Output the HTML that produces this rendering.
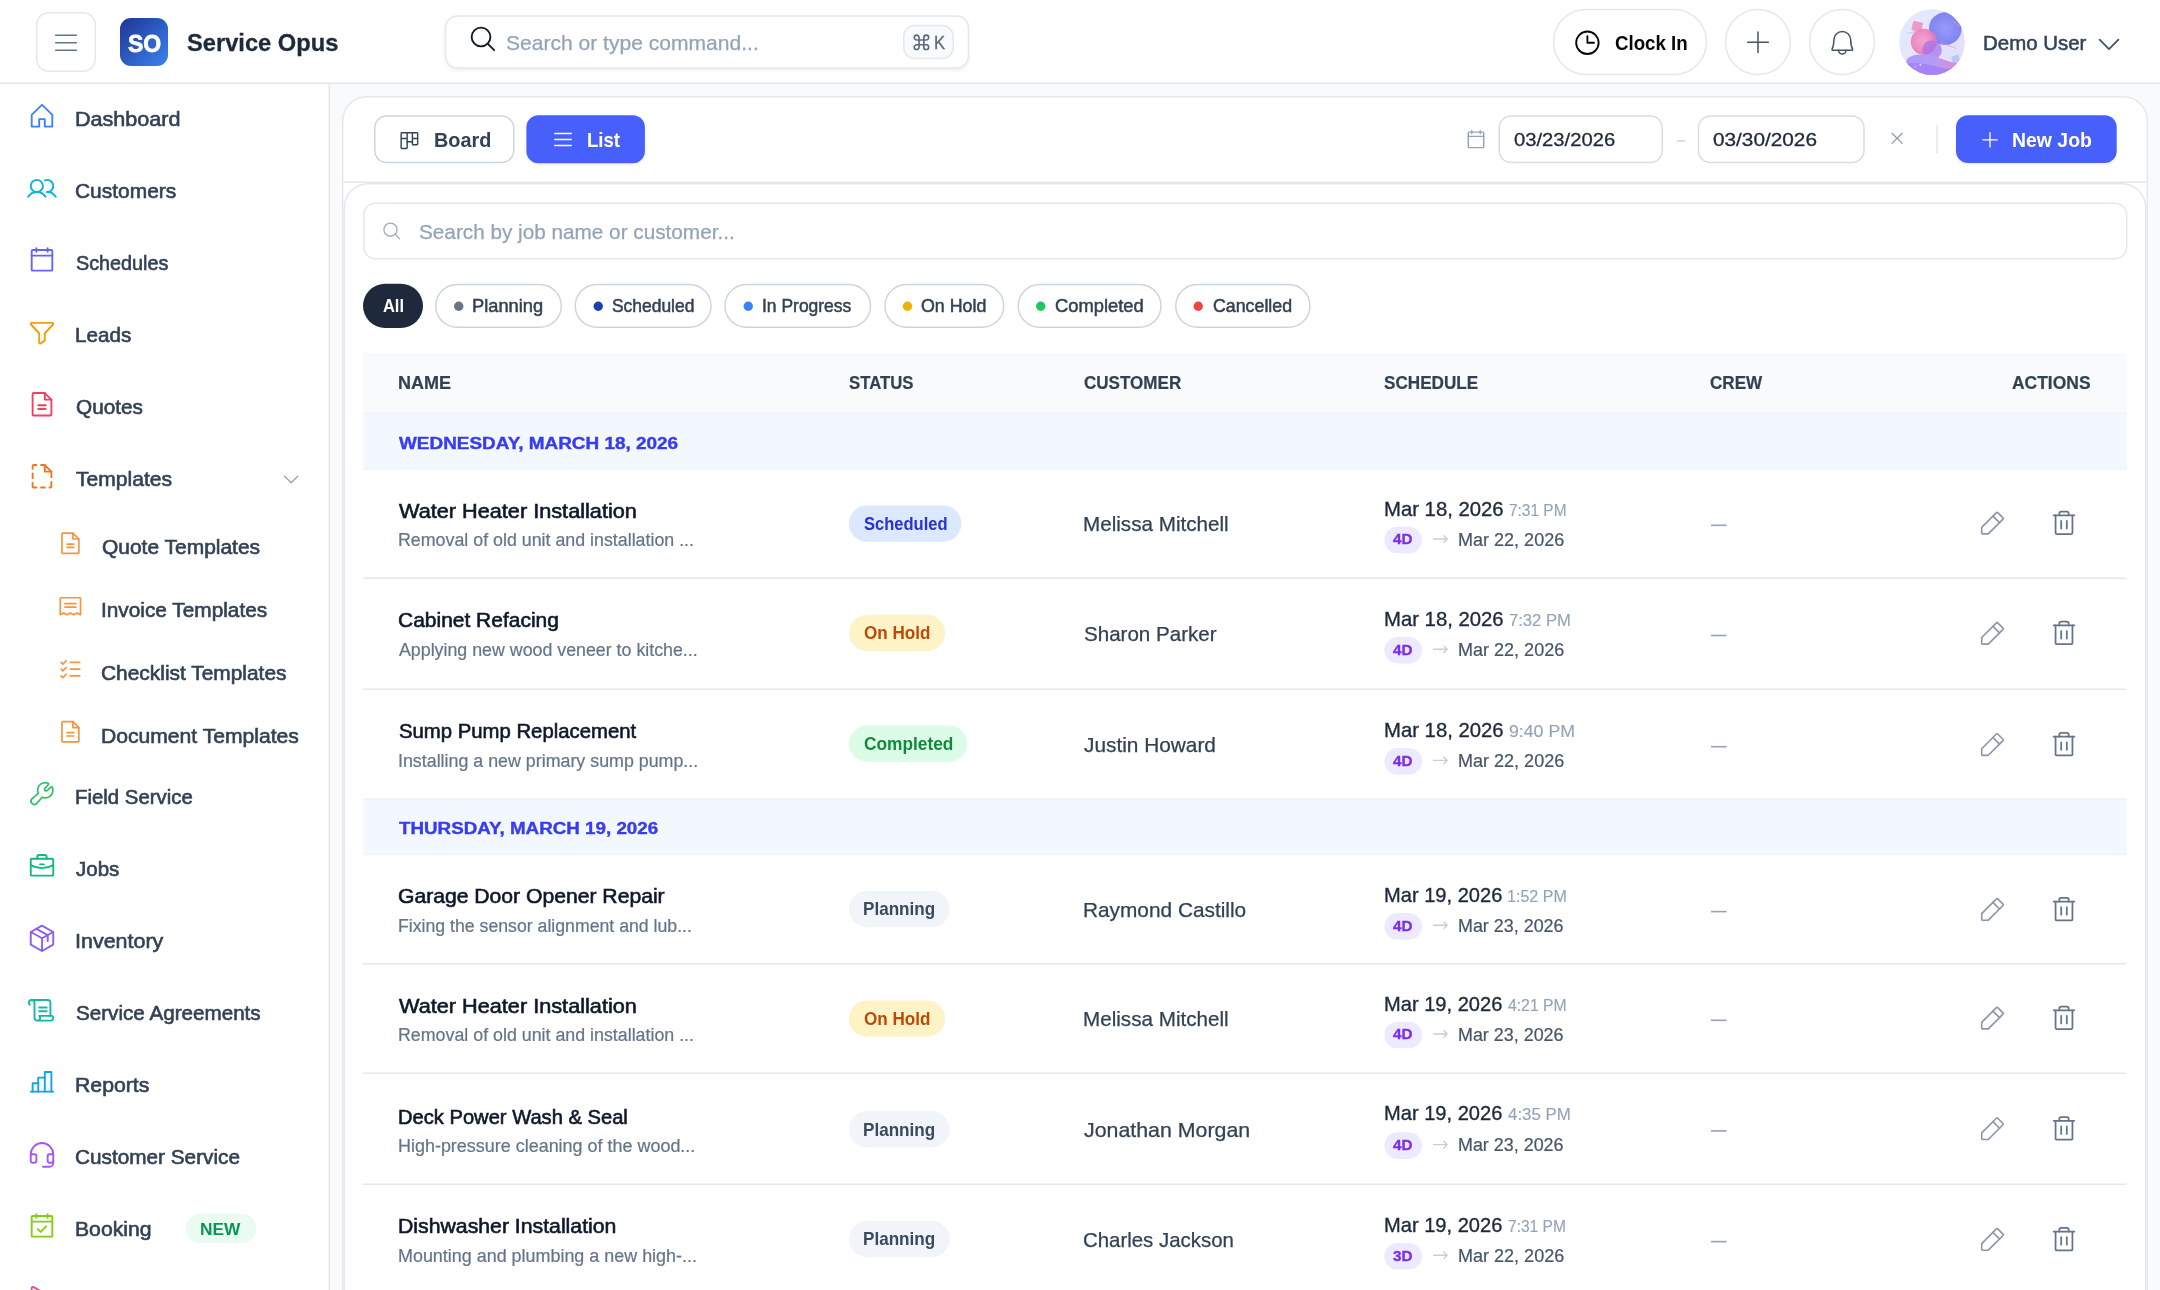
<!DOCTYPE html>
<html lang="en"><head><meta charset="utf-8"><title>Service Opus - Jobs</title>
<style>
html,body{margin:0;padding:0;}
body{width:2160px;height:1290px;overflow:hidden;position:relative;background:#f9fafb;font-family:"Liberation Sans",sans-serif;}
svg.bg{position:absolute;left:0;top:0;}
svg.ic{position:absolute;left:0;top:0;fill:none;stroke-linecap:round;stroke-linejoin:round;}
.t{position:absolute;white-space:nowrap;line-height:1;transform-origin:0 0;display:block;-webkit-font-smoothing:antialiased;}
.b{font-weight:700;}
.tx{position:absolute;left:0;top:0;width:2160px;height:1290px;will-change:transform;}
</style></head><body>
<svg class="bg" width="2160" height="1290" viewBox="0 0 2160 1290">
<defs><filter id="sh" x="-5%" y="-20%" width="110%" height="150%"><feDropShadow dx="0" dy="1.5" stdDeviation="1.6" flood-color="#0f172a" flood-opacity="0.07"/></filter></defs>
<rect x="0" y="0" width="2160" height="1290" fill="#f9fafb" />
<rect x="0" y="0" width="2160" height="82.5" fill="#ffffff" />
<line x1="0" y1="83.25" x2="2160" y2="83.25" stroke="#e5e7eb" stroke-width="1.5" stroke-linecap="butt"/>
<rect x="36.75" y="12.75" width="58.5" height="58.5" rx="12" fill="#fff" stroke="#e5e7eb" stroke-width="1.5" />
<defs><linearGradient id="lg" x1="0" y1="0" x2="1" y2="1"><stop offset="0" stop-color="#1f3594"/><stop offset="1" stop-color="#3b82f0"/></linearGradient></defs>
<rect x="120" y="18" width="48" height="48" rx="11" fill="url(#lg)" />
<rect x="445.5" y="16" width="523" height="52" rx="12" fill="#fff" stroke="#e2e8f0" stroke-width="1.5" filter="url(#sh)"/>
<rect x="903.75" y="25.5" width="49.5" height="33" rx="11" fill="#f8fafc" stroke="#e2e8f0" stroke-width="1.5" />
<rect x="1553.5" y="9.5" width="153" height="65" rx="32.5" fill="#fff" stroke="#e5e7eb" stroke-width="1.5" />
<circle cx="1758" cy="42" r="32.5" fill="#fff" stroke="#e5e7eb" stroke-width="1.5"/>
<circle cx="1842" cy="42" r="32.5" fill="#fff" stroke="#e5e7eb" stroke-width="1.5"/>
<rect x="0" y="84" width="328.5" height="1206" fill="#ffffff" />
<line x1="329.25" y1="84" x2="329.25" y2="1290" stroke="#e5e7eb" stroke-width="1.5" stroke-linecap="butt"/>
<path d="M31.7 1293 V1288.2 a1.3 1.3 0 0 1 2 -1.1 L42 1292" fill="none" stroke="#ec4899" stroke-width="1.9" stroke-linejoin="round"/>
<rect x="186" y="1213.6" width="70.3" height="29.7" rx="14.85" fill="#eafbf1" />
<rect x="342.75" y="96.75" width="1804.5" height="1300" rx="24" fill="#ffffff" stroke="#e5e7eb" stroke-width="1.5" />
<line x1="343.5" y1="182.25" x2="2146.5" y2="182.25" stroke="#e5e7eb" stroke-width="1.5" stroke-linecap="butt"/>
<rect x="344.25" y="183.75" width="1801.5" height="1300" rx="24" fill="#ffffff" stroke="#e5e7eb" stroke-width="1.5" />
<rect x="374.75" y="116" width="139" height="46.5" rx="12" fill="#fff" stroke="#cbd5e1" stroke-width="1.5" />
<rect x="526.4" y="115.3" width="118.5" height="48" rx="12" fill="#4760fc" filter="url(#sh)"/>
<rect x="1499.25" y="116" width="163" height="46.5" rx="12" fill="#fff" stroke="#d8dde5" stroke-width="1.5" />
<line x1="1676.7" y1="141" x2="1685" y2="141" stroke="#cbd5e1" stroke-width="1.5" stroke-linecap="butt"/>
<rect x="1698.5" y="116" width="165.5" height="46.5" rx="12" fill="#fff" stroke="#d8dde5" stroke-width="1.5" />
<line x1="1892" y1="133.3" x2="1902.1" y2="143.4" stroke="#8f9bb0" stroke-width="1.3" stroke-linecap="round"/>
<line x1="1902.1" y1="133.3" x2="1892" y2="143.4" stroke="#8f9bb0" stroke-width="1.3" stroke-linecap="round"/>
<line x1="1937" y1="125" x2="1937" y2="153.5" stroke="#e2e8f0" stroke-width="1.5" stroke-linecap="butt"/>
<rect x="1956" y="115.3" width="160.7" height="47.7" rx="12" fill="#4760fc" filter="url(#sh)"/>
<rect x="363.75" y="203.25" width="1763" height="55.5" rx="12" fill="#fff" stroke="#e2e8f0" stroke-width="1.5" />
<rect x="363" y="283.75" width="60" height="44.25" rx="22.1" fill="#1e293b" />
<rect x="435.75" y="284.5" width="125.5" height="42.75" rx="21.4" fill="#fff" stroke="#cbd5e1" stroke-width="1.5" />
<circle cx="458.75" cy="306.2" r="4.7" fill="#6b7280"/>
<rect x="575.25" y="284.5" width="135.75" height="42.75" rx="21.4" fill="#fff" stroke="#cbd5e1" stroke-width="1.5" />
<circle cx="598.25" cy="306.2" r="4.7" fill="#1e3fae"/>
<rect x="725.0" y="284.5" width="145.5" height="42.75" rx="21.4" fill="#fff" stroke="#cbd5e1" stroke-width="1.5" />
<circle cx="748.25" cy="306.2" r="4.7" fill="#3b82f6"/>
<rect x="885.0" y="284.5" width="118.75" height="42.75" rx="21.4" fill="#fff" stroke="#cbd5e1" stroke-width="1.5" />
<circle cx="907.5" cy="306.2" r="4.7" fill="#eab308"/>
<rect x="1018.25" y="284.5" width="142.75" height="42.75" rx="21.4" fill="#fff" stroke="#cbd5e1" stroke-width="1.5" />
<circle cx="1040.75" cy="306.2" r="4.7" fill="#22c55e"/>
<rect x="1175.75" y="284.5" width="134.25" height="42.75" rx="21.4" fill="#fff" stroke="#cbd5e1" stroke-width="1.5" />
<circle cx="1198.25" cy="306.2" r="4.7" fill="#ef4444"/>
<rect x="363" y="353" width="1763.6999999999998" height="59.5" fill="#f9fafb" />
<rect x="363" y="412.4" width="1763.6999999999998" height="57.2" fill="#f3f7fe" />
<line x1="363" y1="413.15" x2="2126.7" y2="413.15" stroke="#f0f3f8" stroke-width="1.5" stroke-linecap="butt"/>
<line x1="363" y1="468.9" x2="2126.7" y2="468.9" stroke="#f1f3f8" stroke-width="1.5" stroke-linecap="butt"/>
<line x1="363" y1="578.25" x2="2126.7" y2="578.25" stroke="#e4e8ee" stroke-width="1.5" stroke-linecap="butt"/>
<rect x="848.9" y="505.4" width="112.5" height="36.3" rx="18.15" fill="#dbe8fe" />
<rect x="1384.4" y="526.7" width="37.6" height="26.6" rx="13.3" fill="#ede9fe" />
<line x1="1711" y1="525.3" x2="1726.5" y2="525.3" stroke="#94a3b8" stroke-width="1.6" stroke-linecap="butt"/>
<line x1="363" y1="689.25" x2="2126.7" y2="689.25" stroke="#e4e8ee" stroke-width="1.5" stroke-linecap="butt"/>
<rect x="848.9" y="614.85" width="96.3" height="36.3" rx="18.15" fill="#fef3c7" />
<rect x="1384.4" y="636.9000000000001" width="37.6" height="26.6" rx="13.3" fill="#ede9fe" />
<line x1="1711" y1="635.5" x2="1726.5" y2="635.5" stroke="#94a3b8" stroke-width="1.6" stroke-linecap="butt"/>
<rect x="848.9" y="725.6" width="118.5" height="36.3" rx="18.15" fill="#dcfce7" />
<rect x="1384.4" y="748.1" width="37.6" height="26.6" rx="13.3" fill="#ede9fe" />
<line x1="1711" y1="746.6999999999999" x2="1726.5" y2="746.6999999999999" stroke="#94a3b8" stroke-width="1.6" stroke-linecap="butt"/>
<rect x="363" y="798" width="1763.6999999999998" height="57.2" fill="#f3f7fe" />
<line x1="363" y1="798.75" x2="2126.7" y2="798.75" stroke="#f0f3f8" stroke-width="1.5" stroke-linecap="butt"/>
<line x1="363" y1="854.5" x2="2126.7" y2="854.5" stroke="#f1f3f8" stroke-width="1.5" stroke-linecap="butt"/>
<line x1="363" y1="963.75" x2="2126.7" y2="963.75" stroke="#e4e8ee" stroke-width="1.5" stroke-linecap="butt"/>
<rect x="848.9" y="890.9" width="100.7" height="36.3" rx="18.15" fill="#f1f4f9" />
<rect x="1384.4" y="913.0" width="37.6" height="26.6" rx="13.3" fill="#ede9fe" />
<line x1="1711" y1="911.5999999999999" x2="1726.5" y2="911.5999999999999" stroke="#94a3b8" stroke-width="1.6" stroke-linecap="butt"/>
<line x1="363" y1="1073.25" x2="2126.7" y2="1073.25" stroke="#e4e8ee" stroke-width="1.5" stroke-linecap="butt"/>
<rect x="848.9" y="1000.4" width="96.3" height="36.3" rx="18.15" fill="#fef3c7" />
<rect x="1384.4" y="1021.7" width="37.6" height="26.6" rx="13.3" fill="#ede9fe" />
<line x1="1711" y1="1020.3" x2="1726.5" y2="1020.3" stroke="#94a3b8" stroke-width="1.6" stroke-linecap="butt"/>
<line x1="363" y1="1184.25" x2="2126.7" y2="1184.25" stroke="#e4e8ee" stroke-width="1.5" stroke-linecap="butt"/>
<rect x="848.9" y="1111.1000000000001" width="100.7" height="36.3" rx="18.15" fill="#f1f4f9" />
<rect x="1384.4" y="1132.3" width="37.6" height="26.6" rx="13.3" fill="#ede9fe" />
<line x1="1711" y1="1130.8999999999999" x2="1726.5" y2="1130.8999999999999" stroke="#94a3b8" stroke-width="1.6" stroke-linecap="butt"/>
<rect x="848.9" y="1220.9" width="100.7" height="36.3" rx="18.15" fill="#f1f4f9" />
<rect x="1384.4" y="1243.0" width="37.6" height="26.6" rx="13.3" fill="#ede9fe" />
<line x1="1711" y1="1241.6" x2="1726.5" y2="1241.6" stroke="#94a3b8" stroke-width="1.6" stroke-linecap="butt"/>
<defs>
<clipPath id="avc"><circle cx="1932" cy="42" r="33"/></clipPath>
<radialGradient id="avb" cx="0.5" cy="0.5" r="0.6"><stop offset="0" stop-color="#979af8"/><stop offset="1" stop-color="#7b7ff1"/></radialGradient>
<radialGradient id="avp" cx="0.45" cy="0.45" r="0.6"><stop offset="0" stop-color="#f3a0cc"/><stop offset="1" stop-color="#e873b4"/></radialGradient>
<linearGradient id="avw" x1="0" y1="0" x2="1" y2="0"><stop offset="0" stop-color="#a898f9"/><stop offset="0.6" stop-color="#b79bf6"/><stop offset="1" stop-color="#ec86c4"/></linearGradient>
<linearGradient id="avbg" x1="0" y1="0" x2="1" y2="1"><stop offset="0" stop-color="#e6ebfe"/><stop offset="1" stop-color="#e2dcfb"/></linearGradient>
</defs>
<g clip-path="url(#avc)">
<circle cx="1932" cy="42" r="33" fill="url(#avbg)"/>
<rect x="1912.3" y="21.6" width="10" height="9.5" rx="1" fill="#f097c9" transform="rotate(12 1917 26)"/>
<circle cx="1945.3" cy="28.6" r="16.3" fill="url(#avb)"/>
<circle cx="1923.8" cy="41.8" r="13" fill="url(#avp)" opacity="0.92"/>
<circle cx="1932" cy="50" r="9.8" fill="#a571ea" opacity="0.72"/>
<rect x="1952" y="55.5" width="7.5" height="7.5" rx="1" fill="#b9c3fc" transform="rotate(-18 1955.7 59.2)"/>
<path d="M1907 59 C1913 53 1928 53.5 1938 57.5 C1947 61 1953 63 1960 63.5 L1962 80 L1900 80 Z" fill="url(#avw)"/>
<path d="M1908 63.5 C1918 62 1930 65 1942 68 C1950 69.5 1956 67 1962 63 L1962 80 L1900 80 Z" fill="#a683f8"/>
<circle cx="1915.3" cy="66.8" r="1.3" fill="#b7a5fb"/><circle cx="1925.3" cy="68.4" r="1.5" fill="#9a8af7"/><circle cx="1920.4" cy="64.9" r="0.9" fill="#e6e0ff"/>
<circle cx="1955" cy="22" r="1.1" fill="#c58ad8"/><circle cx="1958.2" cy="25.4" r="1.4" fill="#c58ad8"/>
<path d="M1907.3 33.5 L1916 31.4" stroke="#b9b4fa" stroke-width="0.8"/>
<path d="M1940.5 42.3 L1956.5 48.5" stroke="#ee8fc0" stroke-width="0.7"/>
</g>
<!-- kbd: command glyph + K -->
<g fill="none" stroke="#5b6880" stroke-width="1.6" stroke-linejoin="round">
<path d="M919.05 39.95 h4.8 v-2.4 a2.4 2.4 0 1 1 2.4 2.4 h-2.4 v4.8 h2.4 a2.4 2.4 0 1 1 -2.4 2.4 v-2.4 h-4.8 v2.4 a2.4 2.4 0 1 1 -2.4 -2.4 h2.4 v-4.8 h-2.4 a2.4 2.4 0 1 1 2.4 -2.4 Z"/>
</g>

</svg>
<svg class="ic" width="2160" height="1290" viewBox="0 0 2160 1290">
<g transform="translate(51.00 27.70) scale(0.11719)" stroke="#64748b" stroke-width="14"><path d="M40 64H216M40 128H216M40 192H216"/></g>
<g transform="translate(467.90 23.90) scale(0.11719)" stroke="#111827" stroke-width="16"><circle cx="112" cy="112" r="80"/><path d="M168.6 168.6L224 224"/></g>
<g transform="translate(1572.40 27.80) scale(0.11719)" stroke="#060608" stroke-width="16"><circle cx="128" cy="128" r="96"/><path d="M128 72V128H184"/></g>
<g transform="translate(1743.00 27.30) scale(0.11719)" stroke="#475569" stroke-width="13"><path d="M40 128H216M128 40V216"/></g>
<g transform="translate(1827.30 27.77) scale(0.11719)" stroke="#475569" stroke-width="13"><path d="M96 192a32 32 0 0 0 64 0"/><path d="M56 104a72 72 0 0 1 144 0c0 35.8 8.3 64.6 14.9 76A8 8 0 0 1 208 192H48a8 8 0 0 1-6.9-12C47.7 168.6 56 139.8 56 104Z"/></g>
<g transform="translate(2094.00 28.46) scale(0.11719)" stroke="#475569" stroke-width="16"><path d="M208 96L128 176L48 96"/></g>
<g transform="translate(27.00 101.30) scale(0.11719)" stroke="#3b82f6" stroke-width="16"><path d="M104 216V152h48v64h64V120a8 8 0 0 0-2.3-5.7l-80-80a8 8 0 0 0-11.4 0l-80 80A8 8 0 0 0 40 120v96Z"/></g>
<g transform="translate(27.00 173.30) scale(0.11719)" stroke="#06b6d4" stroke-width="16"><circle cx="84" cy="108" r="52"/><path d="M10.2 200a88 88 0 0 1 147.6 0"/><path d="M172 160a87.9 87.9 0 0 1 73.8 40"/><path d="M152.7 59.7A52 52 0 1 1 172 160"/></g>
<g transform="translate(27.00 245.30) scale(0.11719)" stroke="#6366f1" stroke-width="16"><rect x="40" y="40" width="176" height="176" rx="8"/><path d="M176 24V56M80 24V56M40 88H216"/></g>
<g transform="translate(27.00 317.30) scale(0.11719)" stroke="#f59e0b" stroke-width="16"><path d="M34.1 61.4A8 8 0 0 1 40 48H216a8 8 0 0 1 5.9 13.4L152 136v58.7a8 8 0 0 1-3.6 6.6l-32 21.4A8 8 0 0 1 104 216V136Z"/></g>
<g transform="translate(27.00 389.30) scale(0.11719)" stroke="#f43f5e" stroke-width="16"><path d="M200 224H56a8 8 0 0 1-8-8V40a8 8 0 0 1 8-8h96l56 56V216A8 8 0 0 1 200 224Z"/><path d="M152 32V88H208"/><path d="M96 136H160M96 168H160"/></g>
<g transform="translate(27.00 461.30) scale(0.11719)" stroke="#f97316" stroke-width="16"><path d="M80 224H56a8 8 0 0 1-8-8V184"/><path d="M120 32H152L208 88V136"/><path d="M48 64V40a8 8 0 0 1 8-8H80"/><path d="M152 32V88H208"/><path d="M208 176v40a8 8 0 0 1-8 8h-8"/><path d="M48 104V144M120 224H152"/></g>
<g transform="translate(28.40 780.10) scale(0.10547)" stroke="#22c55e" stroke-width="16"><path d="M226.8 69a8 8 0 0 0-12.9-2.9l-40.3 37.2-17.2-3.7-3.7-17.2 37.2-40.3A8 8 0 0 0 187 29.2 72 72 0 0 0 88 96a72.3 72.3 0 0 0 6 28.9L33.8 177c-.2.1-.3.3-.4.4a32 32 0 0 0 45.2 45.2c.1-.1.3-.3.4-.4L131.1 162A72 72 0 0 0 232 96 71.6 71.6 0 0 0 226.8 69Z"/></g>
<g transform="translate(27.00 851.30) scale(0.11719)" stroke="#10b981" stroke-width="16"><rect x="32" y="64" width="192" height="144" rx="8"/><path d="M168 64V48a16 16 0 0 0-16-16H104A16 16 0 0 0 88 48V64"/><path d="M224 118.3A191.1 191.1 0 0 1 128 144a191.1 191.1 0 0 1-96-25.7"/><path d="M112 112H144"/></g>
<g transform="translate(27.00 923.30) scale(0.11719)" stroke="#8b5cf6" stroke-width="16"><path d="M224 177.3V78.7a8 8 0 0 0-4.1-7l-88-49.5a8 8 0 0 0-7.8 0l-88 49.5a8 8 0 0 0-4.1 7v98.6a8 8 0 0 0 4.1 7l88 49.5a8 8 0 0 0 7.8 0l88-49.5A8 8 0 0 0 224 177.3Z"/><path d="M177 152.5V100.5L80 47.4"/><path d="M222.9 74.6L129 128L33.1 74.6"/><path d="M129 128L128 234.8"/></g>
<g transform="translate(27.00 995.30) scale(0.11719)" stroke="#14b8a6" stroke-width="16"><path d="M200 176V64a24 24 0 0 0-24-24H40"/><path d="M104 104H168M104 136H168"/><path d="M24 80s-8-6-8-16a24 24 0 0 1 48 0V192a24 24 0 0 0 48 0c0-10-8-16-8-16H216s8 6 8 16a24 24 0 0 1-24 24H88"/></g>
<g transform="translate(27.00 1067.30) scale(0.11719)" stroke="#0ea5e9" stroke-width="16"><path d="M48 208V136H96"/><path d="M224 208H32"/><path d="M96 208V88H152"/><path d="M152 208V40H208V208"/></g>
<g transform="translate(27.00 1139.30) scale(0.11719)" stroke="#a855f7" stroke-width="16"><path d="M224 128H192a16 16 0 0 0-16 16v40a16 16 0 0 0 16 16h16a16 16 0 0 0 16-16V128a96 96 0 0 0-192 0v56a16 16 0 0 0 16 16H64a16 16 0 0 0 16-16V144a16 16 0 0 0-16-16H32"/><path d="M224 184v18a32 32 0 0 1-32 32H136"/></g>
<g transform="translate(27.00 1211.30) scale(0.11719)" stroke="#84cc16" stroke-width="16"><rect x="40" y="40" width="176" height="176" rx="8"/><path d="M176 24V56M80 24V56M40 88H216"/><path d="M92 152L116 176L164 128"/></g>
<g transform="translate(280.65 468.39) scale(0.08203)" stroke="#94a3b8" stroke-width="16"><path d="M208 96L128 176L48 96"/></g>
<g transform="translate(56.90 529.70) scale(0.10547)" stroke="#fb923c" stroke-width="16"><path d="M200 224H56a8 8 0 0 1-8-8V40a8 8 0 0 1 8-8h96l56 56V216A8 8 0 0 1 200 224Z"/><path d="M152 32V88H208"/><path d="M96 136H160M96 168H160"/></g>
<g transform="translate(56.90 592.70) scale(0.10547)" stroke="#fb923c" stroke-width="16"><path d="M76 104H180M76 136H180"/><path d="M32 208V56a8 8 0 0 1 8-8H216a8 8 0 0 1 8 8V208l-32-16-32 16-32-16-32 16-32-16Z"/></g>
<g transform="translate(56.90 655.70) scale(0.10547)" stroke="#fb923c" stroke-width="16"><path d="M128 128H216M128 64H216M128 192H216"/><path d="M40 64L56 80L88 48"/><path d="M40 128L56 144L88 112"/><path d="M40 192L56 208L88 176"/></g>
<g transform="translate(56.90 718.30) scale(0.10547)" stroke="#fb923c" stroke-width="16"><path d="M200 224H56a8 8 0 0 1-8-8V40a8 8 0 0 1 8-8h96l56 56V216A8 8 0 0 1 200 224Z"/><path d="M152 32V88H208"/><path d="M96 136H160M96 168H160"/></g>
<g transform="translate(397.40 128.32) scale(0.09375)" stroke="#334155" stroke-width="15"><path d="M48 48H208a8 8 0 0 1 8 8V168a8 8 0 0 1-8 8H168a8 8 0 0 1-8-8V144H104V208a8 8 0 0 1-8 8H48a8 8 0 0 1-8-8V56A8 8 0 0 1 48 48Z"/><path d="M104 48V144M160 48V144M46 108H104M160 108H210"/></g>
<g transform="translate(551.00 127.50) scale(0.09375)" stroke="#ffffff" stroke-width="16"><path d="M40 64H216M40 128H216M40 192H216"/></g>
<g transform="translate(1464.75 128.65) scale(0.08789)" stroke="#94a3b8" stroke-width="16"><rect x="40" y="40" width="176" height="176" rx="8"/><path d="M176 24V56M80 24V56M40 88H216"/></g>
<g transform="translate(1979.50 129.30) scale(0.08203)" stroke="#ffffff" stroke-width="16"><path d="M40 128H216M128 40V216"/></g>
<g transform="translate(381.30 220.50) scale(0.08203)" stroke="#a0acbd" stroke-width="16"><circle cx="112" cy="112" r="80"/><path d="M168.6 168.6L224 224"/></g>
<g transform="translate(1431.15 529.75) scale(0.07227)" stroke="#c5cedb" stroke-width="19"><path d="M34 128H222M176 82L222 128L176 174"/></g>
<g transform="translate(1977.00 508.60) scale(0.11719)" stroke="#8a96ab" stroke-width="14"><path d="M92.7 216H48a8 8 0 0 1-8-8V163.3a8 8 0 0 1 2.3-5.6L165.7 34.3a8 8 0 0 1 11.3 0L221.7 79a8 8 0 0 1 0 11.3L98.3 213.7A8 8 0 0 1 92.7 216Z"/><path d="M136 64L192 120"/></g>
<g transform="translate(2049.00 508.70) scale(0.11719)" stroke="#64748b" stroke-width="15"><path d="M216 56H40M104 104V168M152 104V168"/><path d="M200 56V208a8 8 0 0 1-8 8H64a8 8 0 0 1-8-8V56"/><path d="M168 56V40a16 16 0 0 0-16-16H104A16 16 0 0 0 88 40V56"/></g>
<g transform="translate(1431.15 639.95) scale(0.07227)" stroke="#c5cedb" stroke-width="19"><path d="M34 128H222M176 82L222 128L176 174"/></g>
<g transform="translate(1977.00 618.80) scale(0.11719)" stroke="#8a96ab" stroke-width="14"><path d="M92.7 216H48a8 8 0 0 1-8-8V163.3a8 8 0 0 1 2.3-5.6L165.7 34.3a8 8 0 0 1 11.3 0L221.7 79a8 8 0 0 1 0 11.3L98.3 213.7A8 8 0 0 1 92.7 216Z"/><path d="M136 64L192 120"/></g>
<g transform="translate(2049.00 618.90) scale(0.11719)" stroke="#64748b" stroke-width="15"><path d="M216 56H40M104 104V168M152 104V168"/><path d="M200 56V208a8 8 0 0 1-8 8H64a8 8 0 0 1-8-8V56"/><path d="M168 56V40a16 16 0 0 0-16-16H104A16 16 0 0 0 88 40V56"/></g>
<g transform="translate(1431.15 751.15) scale(0.07227)" stroke="#c5cedb" stroke-width="19"><path d="M34 128H222M176 82L222 128L176 174"/></g>
<g transform="translate(1977.00 730.00) scale(0.11719)" stroke="#8a96ab" stroke-width="14"><path d="M92.7 216H48a8 8 0 0 1-8-8V163.3a8 8 0 0 1 2.3-5.6L165.7 34.3a8 8 0 0 1 11.3 0L221.7 79a8 8 0 0 1 0 11.3L98.3 213.7A8 8 0 0 1 92.7 216Z"/><path d="M136 64L192 120"/></g>
<g transform="translate(2049.00 730.10) scale(0.11719)" stroke="#64748b" stroke-width="15"><path d="M216 56H40M104 104V168M152 104V168"/><path d="M200 56V208a8 8 0 0 1-8 8H64a8 8 0 0 1-8-8V56"/><path d="M168 56V40a16 16 0 0 0-16-16H104A16 16 0 0 0 88 40V56"/></g>
<g transform="translate(1431.15 916.05) scale(0.07227)" stroke="#c5cedb" stroke-width="19"><path d="M34 128H222M176 82L222 128L176 174"/></g>
<g transform="translate(1977.00 894.90) scale(0.11719)" stroke="#8a96ab" stroke-width="14"><path d="M92.7 216H48a8 8 0 0 1-8-8V163.3a8 8 0 0 1 2.3-5.6L165.7 34.3a8 8 0 0 1 11.3 0L221.7 79a8 8 0 0 1 0 11.3L98.3 213.7A8 8 0 0 1 92.7 216Z"/><path d="M136 64L192 120"/></g>
<g transform="translate(2049.00 895.00) scale(0.11719)" stroke="#64748b" stroke-width="15"><path d="M216 56H40M104 104V168M152 104V168"/><path d="M200 56V208a8 8 0 0 1-8 8H64a8 8 0 0 1-8-8V56"/><path d="M168 56V40a16 16 0 0 0-16-16H104A16 16 0 0 0 88 40V56"/></g>
<g transform="translate(1431.15 1024.75) scale(0.07227)" stroke="#c5cedb" stroke-width="19"><path d="M34 128H222M176 82L222 128L176 174"/></g>
<g transform="translate(1977.00 1003.60) scale(0.11719)" stroke="#8a96ab" stroke-width="14"><path d="M92.7 216H48a8 8 0 0 1-8-8V163.3a8 8 0 0 1 2.3-5.6L165.7 34.3a8 8 0 0 1 11.3 0L221.7 79a8 8 0 0 1 0 11.3L98.3 213.7A8 8 0 0 1 92.7 216Z"/><path d="M136 64L192 120"/></g>
<g transform="translate(2049.00 1003.70) scale(0.11719)" stroke="#64748b" stroke-width="15"><path d="M216 56H40M104 104V168M152 104V168"/><path d="M200 56V208a8 8 0 0 1-8 8H64a8 8 0 0 1-8-8V56"/><path d="M168 56V40a16 16 0 0 0-16-16H104A16 16 0 0 0 88 40V56"/></g>
<g transform="translate(1431.15 1135.35) scale(0.07227)" stroke="#c5cedb" stroke-width="19"><path d="M34 128H222M176 82L222 128L176 174"/></g>
<g transform="translate(1977.00 1114.20) scale(0.11719)" stroke="#8a96ab" stroke-width="14"><path d="M92.7 216H48a8 8 0 0 1-8-8V163.3a8 8 0 0 1 2.3-5.6L165.7 34.3a8 8 0 0 1 11.3 0L221.7 79a8 8 0 0 1 0 11.3L98.3 213.7A8 8 0 0 1 92.7 216Z"/><path d="M136 64L192 120"/></g>
<g transform="translate(2049.00 1114.30) scale(0.11719)" stroke="#64748b" stroke-width="15"><path d="M216 56H40M104 104V168M152 104V168"/><path d="M200 56V208a8 8 0 0 1-8 8H64a8 8 0 0 1-8-8V56"/><path d="M168 56V40a16 16 0 0 0-16-16H104A16 16 0 0 0 88 40V56"/></g>
<g transform="translate(1431.15 1246.05) scale(0.07227)" stroke="#c5cedb" stroke-width="19"><path d="M34 128H222M176 82L222 128L176 174"/></g>
<g transform="translate(1977.00 1224.90) scale(0.11719)" stroke="#8a96ab" stroke-width="14"><path d="M92.7 216H48a8 8 0 0 1-8-8V163.3a8 8 0 0 1 2.3-5.6L165.7 34.3a8 8 0 0 1 11.3 0L221.7 79a8 8 0 0 1 0 11.3L98.3 213.7A8 8 0 0 1 92.7 216Z"/><path d="M136 64L192 120"/></g>
<g transform="translate(2049.00 1225.00) scale(0.11719)" stroke="#64748b" stroke-width="15"><path d="M216 56H40M104 104V168M152 104V168"/><path d="M200 56V208a8 8 0 0 1-8 8H64a8 8 0 0 1-8-8V56"/><path d="M168 56V40a16 16 0 0 0-16-16H104A16 16 0 0 0 88 40V56"/></g>
</svg>
<div class="tx">
<span class="t b" style="left:127.80px;top:31.60px;font-size:24.6px;color:#ffffff;-webkit-text-stroke:0.8px #ffffff;transform:scaleX(0.9349);">SO</span>
<span class="t b" style="left:186.80px;top:31.20px;font-size:24.3px;color:#1e293b;-webkit-text-stroke:0.3px #1e293b;transform:scaleX(0.9742);">Service Opus</span>
<span class="t" style="left:506.00px;top:33.00px;font-size:20.4px;color:#94a3b8;-webkit-text-stroke:0.25px #94a3b8;transform:scaleX(1.0324);">Search or type command...</span>
<span class="t" style="left:933.57px;top:34.90px;font-size:17.9px;color:#5b6880;-webkit-text-stroke:0.3px #5b6880;transform:scaleX(0.9273);">K</span>
<span class="t b" style="left:1615.20px;top:32.80px;font-size:20.6px;color:#060608;transform:scaleX(0.9079);">Clock In</span>
<span class="t" style="left:1983.31px;top:32.60px;font-size:20.6px;color:#334155;-webkit-text-stroke:0.5px #334155;transform:scaleX(0.9925);">Demo User</span>
<span class="t" style="left:74.55px;top:108.50px;font-size:20.6px;color:#334155;-webkit-text-stroke:0.6px #334155;transform:scaleX(1.0474);">Dashboard</span>
<span class="t" style="left:74.58px;top:180.50px;font-size:20.6px;color:#334155;-webkit-text-stroke:0.6px #334155;transform:scaleX(1.0167);">Customers</span>
<span class="t" style="left:75.60px;top:252.50px;font-size:20.6px;color:#334155;-webkit-text-stroke:0.6px #334155;transform:scaleX(0.9606);">Schedules</span>
<span class="t" style="left:74.60px;top:324.50px;font-size:20.6px;color:#334155;-webkit-text-stroke:0.6px #334155;transform:scaleX(1.0016);">Leads</span>
<span class="t" style="left:75.60px;top:396.50px;font-size:20.6px;color:#334155;-webkit-text-stroke:0.6px #334155;transform:scaleX(1.0076);">Quotes</span>
<span class="t" style="left:75.60px;top:468.50px;font-size:20.6px;color:#334155;-webkit-text-stroke:0.6px #334155;transform:scaleX(1.0239);">Templates</span>
<span class="t" style="left:74.61px;top:786.50px;font-size:20.6px;color:#334155;-webkit-text-stroke:0.6px #334155;transform:scaleX(0.9892);">Field Service</span>
<span class="t" style="left:75.60px;top:858.50px;font-size:20.6px;color:#334155;-webkit-text-stroke:0.6px #334155;transform:scaleX(0.9953);">Jobs</span>
<span class="t" style="left:74.56px;top:930.50px;font-size:20.6px;color:#334155;-webkit-text-stroke:0.6px #334155;transform:scaleX(1.0425);">Inventory</span>
<span class="t" style="left:75.60px;top:1002.50px;font-size:20.6px;color:#334155;-webkit-text-stroke:0.6px #334155;transform:scaleX(1.0020);">Service Agreements</span>
<span class="t" style="left:74.57px;top:1074.50px;font-size:20.6px;color:#334155;-webkit-text-stroke:0.6px #334155;transform:scaleX(1.0309);">Reports</span>
<span class="t" style="left:74.59px;top:1146.50px;font-size:20.6px;color:#334155;-webkit-text-stroke:0.6px #334155;transform:scaleX(1.0080);">Customer Service</span>
<span class="t" style="left:74.57px;top:1218.50px;font-size:20.6px;color:#334155;-webkit-text-stroke:0.6px #334155;transform:scaleX(1.0279);">Booking</span>
<span class="t" style="left:102.40px;top:537.00px;font-size:20.5px;color:#334155;-webkit-text-stroke:0.6px #334155;transform:scaleX(1.0225);">Quote Templates</span>
<span class="t" style="left:101.38px;top:600.00px;font-size:20.5px;color:#334155;-webkit-text-stroke:0.6px #334155;transform:scaleX(1.0152);">Invoice Templates</span>
<span class="t" style="left:101.38px;top:663.00px;font-size:20.5px;color:#334155;-webkit-text-stroke:0.6px #334155;transform:scaleX(1.0197);">Checklist Templates</span>
<span class="t" style="left:101.37px;top:725.60px;font-size:20.5px;color:#334155;-webkit-text-stroke:0.6px #334155;transform:scaleX(1.0298);">Document Templates</span>
<span class="t b" style="left:199.70px;top:1220.70px;font-size:17.4px;color:#0a9457;transform:scaleX(0.9961);">NEW</span>
<span class="t b" style="left:433.54px;top:130.00px;font-size:20.6px;color:#334155;transform:scaleX(0.9634);">Board</span>
<span class="t b" style="left:586.90px;top:130.00px;font-size:20.6px;color:#ffffff;transform:scaleX(0.9006);">List</span>
<span class="t" style="left:1514.40px;top:130.80px;font-size:18.4px;color:#1e293b;-webkit-text-stroke:0.3px #1e293b;transform:scaleX(1.0989);">03/23/2026</span>
<span class="t" style="left:1713.00px;top:130.80px;font-size:18.4px;color:#1e293b;-webkit-text-stroke:0.3px #1e293b;transform:scaleX(1.1294);">03/30/2026</span>
<span class="t b" style="left:2012.36px;top:130.00px;font-size:20.6px;color:#ffffff;transform:scaleX(0.9435);">New Job</span>
<span class="t" style="left:419.25px;top:222.30px;font-size:20.4px;color:#94a3b8;-webkit-text-stroke:0.25px #94a3b8;transform:scaleX(1.0166);">Search by job name or customer...</span>
<span class="t b" style="left:383.25px;top:297.40px;font-size:18.4px;color:#ffffff;transform:scaleX(0.8932);">All</span>
<span class="t" style="left:472.00px;top:297.40px;font-size:18.2px;color:#334155;-webkit-text-stroke:0.5px #334155;transform:scaleX(1.0048);">Planning</span>
<span class="t" style="left:611.75px;top:297.40px;font-size:18.2px;color:#334155;-webkit-text-stroke:0.5px #334155;transform:scaleX(0.9577);">Scheduled</span>
<span class="t" style="left:762.04px;top:297.40px;font-size:18.2px;color:#334155;-webkit-text-stroke:0.5px #334155;transform:scaleX(0.9602);">In Progress</span>
<span class="t" style="left:920.75px;top:297.40px;font-size:18.2px;color:#334155;-webkit-text-stroke:0.5px #334155;transform:scaleX(0.9793);">On Hold</span>
<span class="t" style="left:1055.00px;top:297.40px;font-size:18.2px;color:#334155;-webkit-text-stroke:0.5px #334155;transform:scaleX(1.0076);">Completed</span>
<span class="t" style="left:1212.50px;top:297.40px;font-size:18.2px;color:#334155;-webkit-text-stroke:0.5px #334155;transform:scaleX(0.9778);">Cancelled</span>
<span class="t b" style="left:398.28px;top:374.90px;font-size:17.6px;color:#334155;-webkit-text-stroke:0.2px #334155;transform:scaleX(1.0241);">NAME</span>
<span class="t b" style="left:849.00px;top:374.90px;font-size:17.6px;color:#334155;-webkit-text-stroke:0.2px #334155;transform:scaleX(0.9518);">STATUS</span>
<span class="t b" style="left:1084.25px;top:374.90px;font-size:17.6px;color:#334155;-webkit-text-stroke:0.2px #334155;transform:scaleX(0.9687);">CUSTOMER</span>
<span class="t b" style="left:1384.00px;top:374.90px;font-size:17.6px;color:#334155;-webkit-text-stroke:0.2px #334155;transform:scaleX(0.9738);">SCHEDULE</span>
<span class="t b" style="left:1710.00px;top:374.90px;font-size:17.6px;color:#334155;-webkit-text-stroke:0.2px #334155;transform:scaleX(0.9714);">CREW</span>
<span class="t b" style="left:2011.90px;top:374.90px;font-size:17.6px;color:#334155;-webkit-text-stroke:0.2px #334155;transform:scaleX(0.9920);">ACTIONS</span>
<span class="t b" style="left:399.20px;top:434.60px;font-size:17.4px;color:#373cf0;-webkit-text-stroke:0.4px #373cf0;transform:scaleX(1.0886);">WEDNESDAY, MARCH 18, 2026</span>
<span class="t" style="left:399.20px;top:500.50px;font-size:20.4px;color:#0f172a;-webkit-text-stroke:0.6px #0f172a;transform:scaleX(1.0636);">Water Heater Installation</span>
<span class="t" style="left:398.19px;top:532.20px;font-size:17.6px;color:#64748b;-webkit-text-stroke:0.2px #64748b;transform:scaleX(1.0123);">Removal of old unit and installation ...</span>
<span class="t b" style="left:863.70px;top:515.80px;font-size:17.8px;color:#2a32d4;transform:scaleX(0.9287);">Scheduled</span>
<span class="t" style="left:1083.19px;top:513.90px;font-size:20.4px;color:#334155;-webkit-text-stroke:0.25px #334155;transform:scaleX(1.0122);">Melissa Mitchell</span>
<span class="t" style="left:1383.70px;top:498.80px;font-size:20.4px;color:#1e293b;-webkit-text-stroke:0.35px #1e293b;transform:scaleX(0.9957);">Mar 18, 2026</span>
<span class="t" style="left:1508.90px;top:501.80px;font-size:17.2px;color:#94a3b8;-webkit-text-stroke:0.15px #94a3b8;transform:scaleX(0.8981);">7:31 PM</span>
<span class="t b" style="left:1393.00px;top:532.40px;font-size:14.8px;color:#7a30ee;-webkit-text-stroke:0.35px #7a30ee;transform:scaleX(1.0297);">4D</span>
<span class="t" style="left:1457.58px;top:531.80px;font-size:17.6px;color:#475569;-webkit-text-stroke:0.2px #475569;transform:scaleX(1.0244);">Mar 22, 2026</span>
<span class="t" style="left:398.17px;top:609.95px;font-size:20.4px;color:#0f172a;-webkit-text-stroke:0.6px #0f172a;transform:scaleX(1.0285);">Cabinet Refacing</span>
<span class="t" style="left:399.20px;top:641.65px;font-size:17.6px;color:#64748b;-webkit-text-stroke:0.2px #64748b;transform:scaleX(1.0113);">Applying new wood veneer to kitche...</span>
<span class="t b" style="left:863.70px;top:625.25px;font-size:17.8px;color:#ba4a05;transform:scaleX(0.9608);">On Hold</span>
<span class="t" style="left:1084.20px;top:624.10px;font-size:20.4px;color:#334155;-webkit-text-stroke:0.25px #334155;transform:scaleX(1.0085);">Sharon Parker</span>
<span class="t" style="left:1383.70px;top:609.00px;font-size:20.4px;color:#1e293b;-webkit-text-stroke:0.35px #1e293b;transform:scaleX(0.9957);">Mar 18, 2026</span>
<span class="t" style="left:1508.90px;top:612.00px;font-size:17.2px;color:#94a3b8;-webkit-text-stroke:0.15px #94a3b8;transform:scaleX(0.9666);">7:32 PM</span>
<span class="t b" style="left:1393.00px;top:642.60px;font-size:14.8px;color:#7a30ee;-webkit-text-stroke:0.35px #7a30ee;transform:scaleX(1.0297);">4D</span>
<span class="t" style="left:1457.58px;top:642.00px;font-size:17.6px;color:#475569;-webkit-text-stroke:0.2px #475569;transform:scaleX(1.0244);">Mar 22, 2026</span>
<span class="t" style="left:399.20px;top:720.70px;font-size:20.4px;color:#0f172a;-webkit-text-stroke:0.6px #0f172a;transform:scaleX(0.9965);">Sump Pump Replacement</span>
<span class="t" style="left:398.19px;top:753.20px;font-size:17.6px;color:#64748b;-webkit-text-stroke:0.2px #64748b;transform:scaleX(1.0133);">Installing a new primary sump pump...</span>
<span class="t b" style="left:863.70px;top:736.00px;font-size:17.8px;color:#0f8a3d;transform:scaleX(0.9724);">Completed</span>
<span class="t" style="left:1084.20px;top:735.30px;font-size:20.4px;color:#334155;-webkit-text-stroke:0.25px #334155;transform:scaleX(1.0213);">Justin Howard</span>
<span class="t" style="left:1383.70px;top:720.20px;font-size:20.4px;color:#1e293b;-webkit-text-stroke:0.35px #1e293b;transform:scaleX(0.9957);">Mar 18, 2026</span>
<span class="t" style="left:1508.90px;top:723.20px;font-size:17.2px;color:#94a3b8;-webkit-text-stroke:0.15px #94a3b8;transform:scaleX(1.0305);">9:40 PM</span>
<span class="t b" style="left:1393.00px;top:753.80px;font-size:14.8px;color:#7a30ee;-webkit-text-stroke:0.35px #7a30ee;transform:scaleX(1.0297);">4D</span>
<span class="t" style="left:1457.58px;top:753.20px;font-size:17.6px;color:#475569;-webkit-text-stroke:0.2px #475569;transform:scaleX(1.0244);">Mar 22, 2026</span>
<span class="t b" style="left:399.20px;top:820.20px;font-size:17.4px;color:#373cf0;-webkit-text-stroke:0.4px #373cf0;transform:scaleX(1.0798);">THURSDAY, MARCH 19, 2026</span>
<span class="t" style="left:398.16px;top:886.00px;font-size:20.4px;color:#0f172a;-webkit-text-stroke:0.6px #0f172a;transform:scaleX(1.0363);">Garage Door Opener Repair</span>
<span class="t" style="left:398.19px;top:917.70px;font-size:17.6px;color:#64748b;-webkit-text-stroke:0.2px #64748b;transform:scaleX(1.0051);">Fixing the sensor alignment and lub...</span>
<span class="t b" style="left:862.74px;top:901.30px;font-size:17.8px;color:#3a4960;transform:scaleX(0.9616);">Planning</span>
<span class="t" style="left:1083.18px;top:900.20px;font-size:20.4px;color:#334155;-webkit-text-stroke:0.25px #334155;transform:scaleX(1.0211);">Raymond Castillo</span>
<span class="t" style="left:1383.72px;top:885.10px;font-size:20.4px;color:#1e293b;-webkit-text-stroke:0.35px #1e293b;transform:scaleX(0.9847);">Mar 19, 2026</span>
<span class="t" style="left:1506.76px;top:888.10px;font-size:17.2px;color:#94a3b8;-webkit-text-stroke:0.15px #94a3b8;transform:scaleX(0.9353);">1:52 PM</span>
<span class="t b" style="left:1393.00px;top:918.70px;font-size:14.8px;color:#7a30ee;-webkit-text-stroke:0.35px #7a30ee;transform:scaleX(1.0297);">4D</span>
<span class="t" style="left:1457.58px;top:918.10px;font-size:17.6px;color:#475569;-webkit-text-stroke:0.2px #475569;transform:scaleX(1.0176);">Mar 23, 2026</span>
<span class="t" style="left:399.20px;top:995.50px;font-size:20.4px;color:#0f172a;-webkit-text-stroke:0.6px #0f172a;transform:scaleX(1.0636);">Water Heater Installation</span>
<span class="t" style="left:398.19px;top:1027.20px;font-size:17.6px;color:#64748b;-webkit-text-stroke:0.2px #64748b;transform:scaleX(1.0123);">Removal of old unit and installation ...</span>
<span class="t b" style="left:863.70px;top:1010.80px;font-size:17.8px;color:#ba4a05;transform:scaleX(0.9608);">On Hold</span>
<span class="t" style="left:1083.19px;top:1008.90px;font-size:20.4px;color:#334155;-webkit-text-stroke:0.25px #334155;transform:scaleX(1.0122);">Melissa Mitchell</span>
<span class="t" style="left:1383.72px;top:993.80px;font-size:20.4px;color:#1e293b;-webkit-text-stroke:0.35px #1e293b;transform:scaleX(0.9847);">Mar 19, 2026</span>
<span class="t" style="left:1507.70px;top:996.80px;font-size:17.2px;color:#94a3b8;-webkit-text-stroke:0.15px #94a3b8;transform:scaleX(0.9156);">4:21 PM</span>
<span class="t b" style="left:1393.00px;top:1027.40px;font-size:14.8px;color:#7a30ee;-webkit-text-stroke:0.35px #7a30ee;transform:scaleX(1.0297);">4D</span>
<span class="t" style="left:1457.58px;top:1026.80px;font-size:17.6px;color:#475569;-webkit-text-stroke:0.2px #475569;transform:scaleX(1.0176);">Mar 23, 2026</span>
<span class="t" style="left:398.21px;top:1107.00px;font-size:20.4px;color:#0f172a;-webkit-text-stroke:0.6px #0f172a;transform:scaleX(0.9876);">Deck Power Wash &amp; Seal</span>
<span class="t" style="left:398.18px;top:1137.90px;font-size:17.6px;color:#64748b;-webkit-text-stroke:0.2px #64748b;transform:scaleX(1.0202);">High-pressure cleaning of the wood...</span>
<span class="t b" style="left:862.74px;top:1121.50px;font-size:17.8px;color:#3a4960;transform:scaleX(0.9616);">Planning</span>
<span class="t" style="left:1084.20px;top:1119.50px;font-size:20.4px;color:#334155;-webkit-text-stroke:0.25px #334155;transform:scaleX(1.0470);">Jonathan Morgan</span>
<span class="t" style="left:1383.72px;top:1103.40px;font-size:20.4px;color:#1e293b;-webkit-text-stroke:0.35px #1e293b;transform:scaleX(0.9847);">Mar 19, 2026</span>
<span class="t" style="left:1507.70px;top:1106.40px;font-size:17.2px;color:#94a3b8;-webkit-text-stroke:0.15px #94a3b8;transform:scaleX(0.9810);">4:35 PM</span>
<span class="t b" style="left:1393.00px;top:1138.00px;font-size:14.8px;color:#7a30ee;-webkit-text-stroke:0.35px #7a30ee;transform:scaleX(1.0297);">4D</span>
<span class="t" style="left:1457.58px;top:1137.40px;font-size:17.6px;color:#475569;-webkit-text-stroke:0.2px #475569;transform:scaleX(1.0176);">Mar 23, 2026</span>
<span class="t" style="left:398.16px;top:1216.00px;font-size:20.4px;color:#0f172a;-webkit-text-stroke:0.6px #0f172a;transform:scaleX(1.0416);">Dishwasher Installation</span>
<span class="t" style="left:398.18px;top:1247.70px;font-size:17.6px;color:#64748b;-webkit-text-stroke:0.2px #64748b;transform:scaleX(1.0188);">Mounting and plumbing a new high-...</span>
<span class="t b" style="left:862.74px;top:1231.30px;font-size:17.8px;color:#3a4960;transform:scaleX(0.9616);">Planning</span>
<span class="t" style="left:1083.20px;top:1230.20px;font-size:20.4px;color:#334155;-webkit-text-stroke:0.25px #334155;transform:scaleX(1.0007);">Charles Jackson</span>
<span class="t" style="left:1383.72px;top:1215.10px;font-size:20.4px;color:#1e293b;-webkit-text-stroke:0.35px #1e293b;transform:scaleX(0.9847);">Mar 19, 2026</span>
<span class="t" style="left:1507.70px;top:1218.10px;font-size:17.2px;color:#94a3b8;-webkit-text-stroke:0.15px #94a3b8;transform:scaleX(0.9044);">7:31 PM</span>
<span class="t b" style="left:1393.00px;top:1248.70px;font-size:14.8px;color:#7a30ee;-webkit-text-stroke:0.35px #7a30ee;transform:scaleX(1.0297);">3D</span>
<span class="t" style="left:1457.58px;top:1248.10px;font-size:17.6px;color:#475569;-webkit-text-stroke:0.2px #475569;transform:scaleX(1.0244);">Mar 22, 2026</span>
</div>
</body></html>
